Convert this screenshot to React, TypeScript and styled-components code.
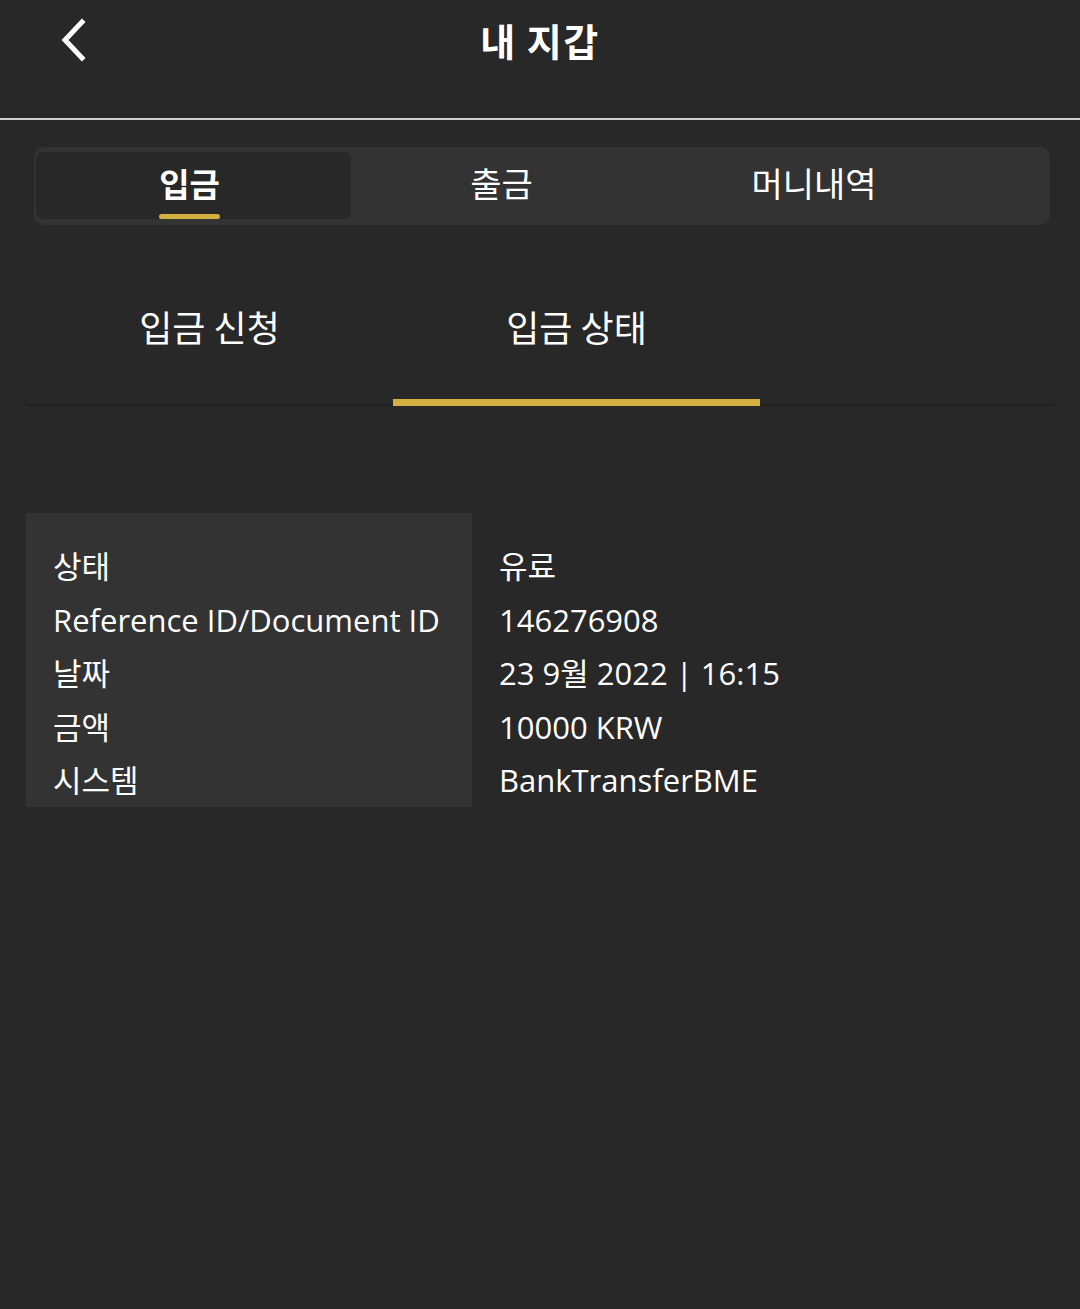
import React, { FC, useState } from "react";
import styled, { createGlobalStyle } from "styled-components";

const colors = {
  bg: "#282828",
  panel: "#333333",
  text: "#ffffff",
  gold: "#d4b040",
  line: "#cfcfcf",
};

const GlobalStyle = createGlobalStyle`
  html, body {
    margin: 0;
    padding: 0;
    background: ${colors.bg};
  }
  body {
    font-family: "Open Sans", "Noto Sans CJK KR", sans-serif;
    color: ${colors.text};
  }
`;

const topTabs = ["입금", "출금", "머니내역"];
const subTabs = ["입금 신청", "입금 상태"];

const rows = [
  { label: "상태", value: "유료" },
  { label: "Reference ID/Document ID", value: "146276908" },
  { label: "날짜", value: "23 9월 2022 | 16:15" },
  { label: "금액", value: "10000 KRW" },
  { label: "시스템", value: "BankTransferBME" },
];

const App: FC = () => {
  const [tab, setTab] = useState(0);
  const [sub, setSub] = useState(1);

  return (
    <Page>
      <GlobalStyle />
      <Header>
        <BackBtn aria-label="back">
          <svg width="40" height="48" viewBox="0 0 40 48" fill="none">
            <path
              d="M25 4 L8 22 L25 40"
              stroke="#fff"
              strokeWidth="5"
              strokeLinecap="square"
              strokeLinejoin="miter"
            />
          </svg>
        </BackBtn>
        <Title>내 지갑</Title>
      </Header>

      <Segment>
        {topTabs.map((name, idx) => (
          <SegItem key={name} active={idx === tab} onClick={() => setTab(idx)}>
            <SegLabel active={idx === tab}>{name}</SegLabel>
          </SegItem>
        ))}
      </Segment>

      <SubTabs>
        {subTabs.map((name, idx) => (
          <SubTab key={name} active={idx === sub} onClick={() => setSub(idx)}>
            {name}
          </SubTab>
        ))}
      </SubTabs>

      <Table>
        <LabelCol>
          {rows.map((r) => (
            <Cell key={r.label}>{r.label}</Cell>
          ))}
        </LabelCol>
        <ValueCol>
          {rows.map((r) => (
            <Cell key={r.label}>{r.value}</Cell>
          ))}
        </ValueCol>
      </Table>
    </Page>
  );
};

const Page = styled.div`
  width: 1080px;
  min-height: 1309px;
  background: ${colors.bg};
`;

const Header = styled.header`
  position: relative;
  height: 118px;
  border-bottom: 2px solid ${colors.line};
  display: flex;
  justify-content: center;
`;

const BackBtn = styled.button`
  position: absolute;
  left: 57px;
  top: 18px;
  padding: 0;
  background: transparent;
  border: none;
  display: flex;
`;

const Title = styled.h1`
  margin: 0;
  padding-top: 13px;
  font-family: "Noto Sans CJK KR", sans-serif;
  font-size: 38px;
  font-weight: 700;
  line-height: 54px;
  letter-spacing: 1.5px;
`;

const Segment = styled.div`
  margin: 27px 30px 0 34px;
  height: 78px;
  box-sizing: border-box;
  padding: 5px 2px;
  background: ${colors.panel};
  border-radius: 10px;
  display: flex;
`;

const SegItem = styled.div<{ active: boolean }>`
  width: 315px;
  height: 67px;
  border-radius: 7px;
  background: ${(p) => (p.active ? colors.bg : "transparent")};
  display: flex;
  justify-content: center;
  cursor: pointer;
  &:nth-child(2) {
    width: 309px;
  }
  &:nth-child(3) {
    width: 316px;
  }
`;

const SegLabel = styled.span<{ active: boolean }>`
  position: relative;
  left: -4px;
  padding-top: 10px;
  font-family: "Noto Sans CJK KR", sans-serif;
  font-size: ${(p) => (p.active ? "33px" : "34px")};
  font-weight: ${(p) => (p.active ? 700 : 400)};
  line-height: 42px;
  height: 51px;

  &::after {
    content: "";
    display: ${(p) => (p.active ? "block" : "none")};
    position: absolute;
    left: 0;
    right: 0;
    bottom: -6px;
    height: 5px;
    border-radius: 3px;
    background: ${colors.gold};
  }
`;

const SubTabs = styled.div`
  margin: 58px 25px 0 26px;
  display: flex;
  border-bottom: 2px solid #202020;
`;

const SubTab = styled.div<{ active: boolean }>`
  width: 367px;
  height: 123px;
  box-sizing: border-box;
  padding-top: 18px;
  text-align: center;
  font-family: "Noto Sans CJK KR", sans-serif;
  font-size: 36px;
  line-height: 50px;
  cursor: pointer;
  border-bottom: 7px solid ${(p) => (p.active ? colors.gold : "transparent")};
  margin-bottom: -2px;
`;

const Table = styled.div`
  margin: 107px 0 0 26px;
  display: flex;
`;

const LabelCol = styled.div`
  width: 446px;
  box-sizing: border-box;
  padding: 27px 0 0 27px;
  height: 294px;
  background: ${colors.panel};
`;

const ValueCol = styled.div`
  padding: 27px 0 0 27px;
`;

const Cell = styled.div`
  font-family: "Open Sans", "Noto Sans CJK KR", sans-serif;
  font-size: 31px;
  line-height: 53.5px;
  white-space: nowrap;
`;

export default App;
